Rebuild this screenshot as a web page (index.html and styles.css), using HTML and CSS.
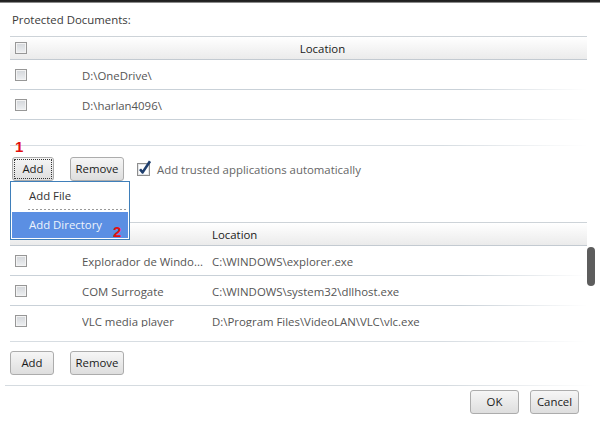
FILE: index.html
```html
<!DOCTYPE html>
<html lang="en">
<head>
<meta charset="utf-8">
<title>Protected Documents</title>
<link rel="stylesheet" href="styles.css">
</head>
<body>
<div class="window">
  <div class="frame-top"></div>
  <div class="panel">
    <div class="title">Protected Documents:</div>

    <div class="grid grid-docs">
      <div class="head head-docs">
        <div class="col-check"><span class="cb"></span></div>
        <div class="head-loc">Location</div>
      </div>
      <div class="row row-docs">
        <div class="col-check"><span class="cb"></span></div>
        <div class="cell">D:\OneDrive\</div>
      </div>
      <div class="row row-docs">
        <div class="col-check"><span class="cb"></span></div>
        <div class="cell">D:\harlan4096\</div>
      </div>
    </div>

    <div class="actions actions-top">
      <button class="btn btn-add is-focused">Add</button>
      <button class="btn btn-remove">Remove</button>
      <label class="check-label">
        <svg class="check-icon" width="16" height="17" viewBox="0 0 16 17">
          <rect x="1.5" y="4.5" width="12" height="12" fill="#fff" stroke="#8e8e8e"/>
          <rect x="2.5" y="5.5" width="10" height="10" fill="none" stroke="#e4e6e8"/>
          <path d="M4 10.2 L6.6 13.4 L14 2.2" fill="none" stroke="#1f3f6e" stroke-width="2.6" stroke-linejoin="round"/>
        </svg>
        <span>Add trusted applications automatically</span>
      </label>
      <span class="marker marker-one">1</span>

      <div class="menu">
        <div class="menu-item">Add File</div>
        <div class="menu-sep"></div>
        <div class="menu-item is-active">Add Directory</div>
        <span class="marker marker-two">2</span>
      </div>
    </div>

    <div class="grid grid-apps">
      <div class="head head-apps">
        <div class="col-check"><span class="cb"></span></div>
        <div class="head-name"></div>
        <div class="head-path">Location</div>
      </div>
      <div class="apps-body">
        <div class="apps-rows">
          <div class="row row-apps">
            <div class="col-check"><span class="cb"></span></div>
            <div class="cell name">Explorador de Windo...</div>
            <div class="cell">C:\WINDOWS\explorer.exe</div>
          </div>
          <div class="row row-apps">
            <div class="col-check"><span class="cb"></span></div>
            <div class="cell name">COM Surrogate</div>
            <div class="cell">C:\WINDOWS\system32\dllhost.exe</div>
          </div>
          <div class="row row-apps">
            <div class="col-check"><span class="cb"></span></div>
            <div class="cell name">VLC media player</div>
            <div class="cell">D:\Program Files\VideoLAN\VLC\vlc.exe</div>
          </div>
        </div>
        <div class="scroll-track"><div class="scroll-thumb"></div></div>
      </div>
    </div>

    <div class="actions actions-bottom">
      <button class="btn btn-add-wide">Add</button>
      <button class="btn btn-remove">Remove</button>
    </div>

    <div class="divider"></div>

    <div class="footer">
      <button class="btn btn-dialog">OK</button>
      <button class="btn btn-dialog">Cancel</button>
    </div>
  </div>
</div>
</body>
</html>
```

FILE: styles.css
```css
html, body {
  margin: 0;
  padding: 0;
  background: #ffffff;
}

body {
  font-family: "Open Sans", "Noto Sans", sans-serif;
  font-size: 11.4px;
  color: #333;
  width: 600px;
  height: 431px;
  overflow: hidden;
}

.window {
  display: flex;
  flex-direction: column;
}

/* dark edge of the host window */
.frame-top {
  height: 3px;
  background: linear-gradient(#1d1d1d 0, #2a2a2a 66%, #8a8a8a 66%, #8a8a8a 100%);
}

.panel {
  display: flex;
  flex-direction: column;
  padding-left: 10px;
}

.title {
  height: 33px;
  line-height: 33px;
  padding-left: 2px;
  color: #3a3a3a;
}

/* ---------- list grids ---------- */
.grid {
  width: 577px;
  display: flex;
  flex-direction: column;
}

.grid-docs {
  height: 110px;
  border-bottom: 1px solid transparent;
  background: linear-gradient(to right, #d7dde2 0, #d7dde2 75%, rgba(215, 221, 226, 0) 100%) left bottom / 100% 1px no-repeat;
}

.head {
  height: 22px;
  border-top: 1px solid #cdd3d8;
  border-bottom: 1px solid #c3cad1;
  background: linear-gradient(#ffffff, #ebebeb);
  display: flex;
  align-items: center;
  color: #1a1a1a;
  flex-shrink: 0;
}

.col-check {
  width: 72px;
  flex-shrink: 0;
  display: flex;
  align-items: center;
  padding-left: 5px;
  box-sizing: border-box;
}

.head-docs .col-check {
  width: 50px;
}

.head-loc {
  flex: 1;
  text-align: center;
  padding-right: 2px;
}

.head-apps .col-check {
  width: 50px;
}

.head-name {
  width: 152px;
  flex-shrink: 0;
}

.head-path {
  flex: 1;
}

.row {
  height: 30px;
  display: flex;
  align-items: center;
  flex-shrink: 0;
  box-sizing: border-box;
  background: linear-gradient(to right, #c9d1d8 0, #c9d1d8 78%, rgba(201, 209, 216, 0) 100%) left bottom / 100% 1px no-repeat;
}

.cell {
  color: #555;
  white-space: nowrap;
}

.cell.name {
  width: 130px;
  flex-shrink: 0;
  overflow: hidden;
}

.cb {
  display: block;
  width: 12px;
  height: 12px;
  box-sizing: border-box;
  border: 1px solid #979797;
  box-shadow: inset 0 0 0 1px #f3f3f3;
  background: linear-gradient(#d3d6da, #eef0f2);
}

.grid-apps {
  margin-top: 41px;
  height: 120px;
  background: linear-gradient(to right, #d7dde2 0, #d7dde2 75%, rgba(215, 221, 226, 0) 100%) left bottom / 100% 1px no-repeat;
}

.apps-body {
  display: flex;
  height: 81px;
  width: 585px;
}

.apps-rows {
  flex: 1;
  overflow: hidden;
  display: flex;
  flex-direction: column;
}

.scroll-track {
  width: 8px;
  padding-top: 1px;
}

.scroll-thumb {
  height: 39px;
  border-radius: 4px;
  background: #5d5d5d;
}

/* ---------- buttons ---------- */
.actions {
  display: flex;
  align-items: center;
  position: relative;
}

.actions-top {
  margin-top: 10px;
  padding-left: 2px;
}

.actions-bottom {
  margin-top: 9px;
}

.btn {
  height: 24px;
  box-sizing: border-box;
  border: 1px solid #acacac;
  border-radius: 3px;
  background: linear-gradient(#f6f6f6, #dedede);
  font-family: inherit;
  font-size: 11.4px;
  color: #1a1a1a;
  padding: 0;
  margin: 0;
  line-height: 20px;
}

.btn-add {
  width: 42px;
}

.btn-add-wide {
  width: 44px;
}

.btn-remove {
  width: 54px;
  margin-left: 16px;
}

.is-focused {
  outline: 1px dotted #333;
  outline-offset: -3px;
}

.check-label {
  display: flex;
  align-items: center;
  margin-left: 12px;
  color: #666;
}

.check-icon {
  margin-top: -4px;
  margin-right: 5px;
}

/* ---------- drop-down ---------- */
.menu {
  position: absolute;
  left: 0;
  top: 24px;
  width: 120px;
  height: 59px;
  box-sizing: border-box;
  border: 1px solid #3f7fba;
  background: #fff;
  padding: 1px;
  display: flex;
  flex-direction: column;
  z-index: 2;
}

.menu-item {
  height: 25px;
  line-height: 25px;
  padding-left: 17px;
  color: #333;
}

.menu-item.is-active {
  height: 26px;
  line-height: 26px;
  background: #5b8fe3;
  color: #eef3fb;
}

.menu-sep {
  height: 4px;
  margin-left: 16px;
  background: linear-gradient(to right, #9a9a9a 50%, transparent 50%) left 1px / 4px 1px repeat-x;
}

.marker {
  position: absolute;
  font-family: "Liberation Sans", Arial, sans-serif;
  font-weight: bold;
  font-size: 15px;
  line-height: 15px;
  color: #e21010;
}

.marker-one {
  left: 5px;
  top: -18px;
}

.marker-two {
  left: 102px;
  top: 42px;
}

/* ---------- footer ---------- */
.divider {
  margin-top: 10px;
  margin-left: -5px;
  width: 588px;
  height: 1px;
  background: linear-gradient(to right, #d5dbe0 0, #d5dbe0 75%, rgba(213, 219, 224, 0) 100%);
}

.footer {
  display: flex;
  justify-content: flex-end;
  padding-right: 21px;
  margin-top: 4px;
}

.btn-dialog {
  width: 49px;
  margin-left: 11px;
}
```
